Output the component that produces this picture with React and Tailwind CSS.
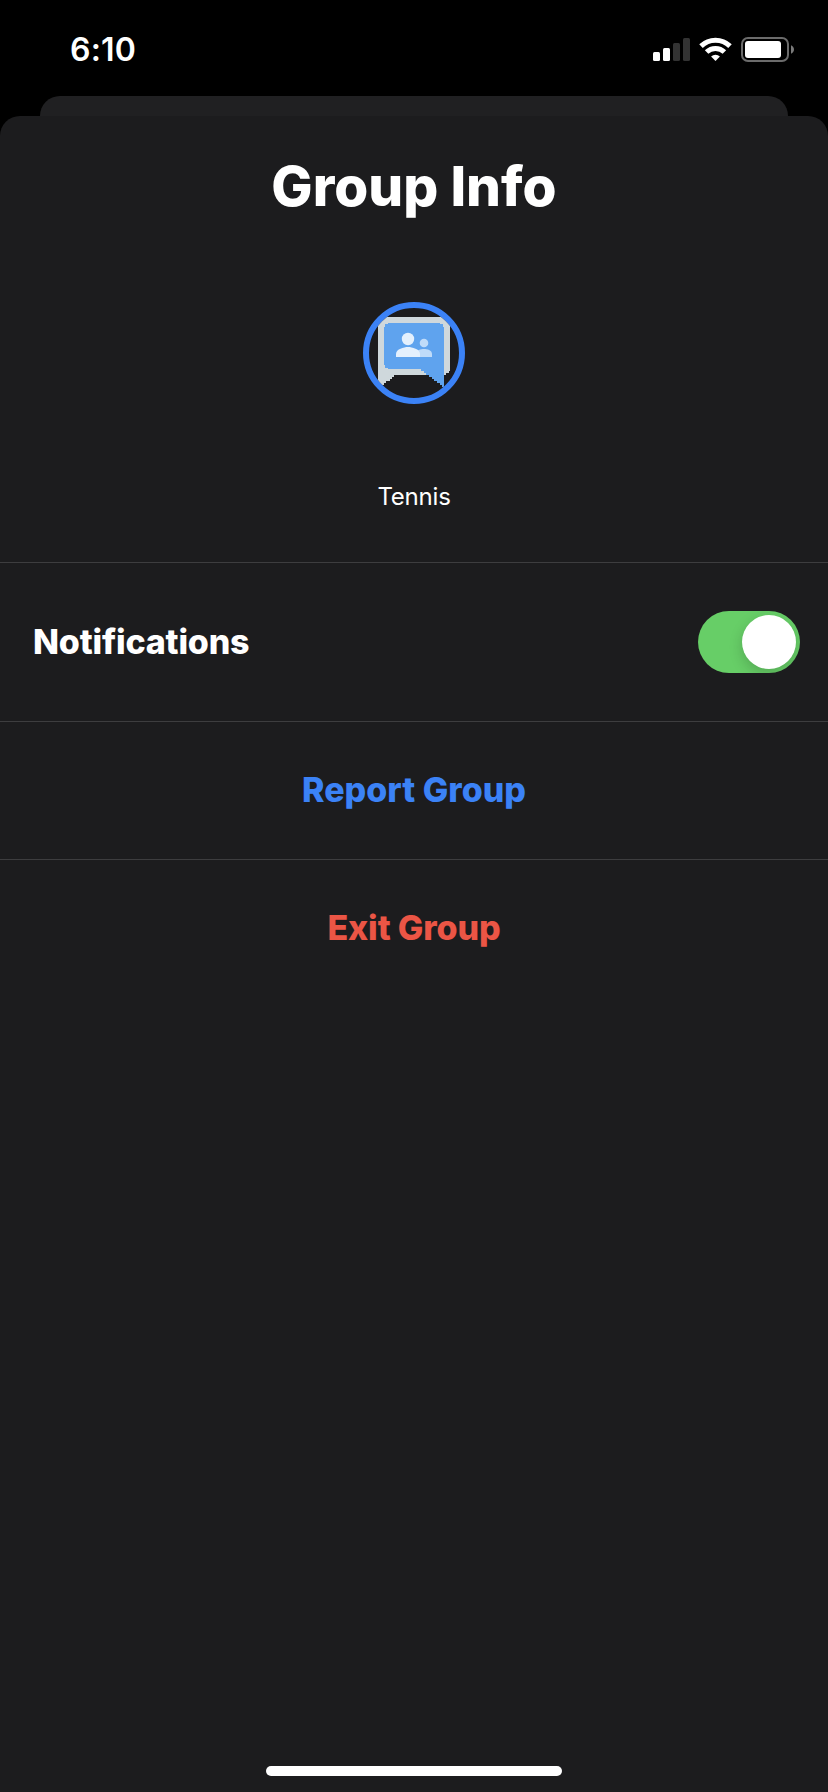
import React, { useState } from 'react';

const StatusBar = () => (
  <div className="flex h-24 items-start justify-between pl-[70px] pr-[34px] pt-[37px]">
    <span className="text-[32px] font-semibold leading-[26px] tracking-[0.2px] text-white">6:10</span>
    <div className="flex items-start">
      <svg width="37" height="25" viewBox="0 0 37 25" className="mr-[9px]">
        <rect x="0" y="15" width="7" height="9" rx="1.5" fill="#fff" />
        <rect x="10" y="11" width="7" height="13" rx="1.5" fill="#fff" />
        <rect x="20" y="6" width="7" height="18" rx="1.5" fill="#333" />
        <rect x="30" y="1" width="7" height="23" rx="1.5" fill="#333" />
      </svg>
      <svg width="33" height="25" viewBox="0 0 33 25" className="mr-[9px]">
        <g fill="none" stroke="#fff" strokeWidth="5">
          <path d="M2 9.1a20.8 20.8 0 0 1 29 0" />
          <path d="M7.6 15a12.8 12.8 0 0 1 17.8 0" />
        </g>
        <path d="M16.5 24l-4.4-4.5a6.4 6.4 0 0 1 8.8 0z" fill="#fff" />
      </svg>
      <svg width="53" height="25" viewBox="0 0 53 25">
        <rect x="1" y="1" width="46" height="23" rx="6" fill="none" stroke="#6b6b6b" strokeWidth="2" />
        <rect x="4" y="4" width="36" height="17" rx="3" fill="#fff" />
        <path d="M50 8.2c1.8.8 3 2.4 3 4.3s-1.2 3.5-3 4.3z" fill="#7a7a7a" />
      </svg>
    </div>
  </div>
);

const GroupAvatar = () => (
  <div className="size-[102px] overflow-hidden rounded-full border-[6px] border-[#3b82f6]">
    <svg width="90" height="90" viewBox="369 308 90 90">
      <path
        d="M378 317H448V319H450V371H449V373H446V375H394V377H392V379H390V381H386V383H384V385H378Z"
        fill="#cfd8dc"
      />
      <path
        d="M388 323H440V324H443V327H444V387H442V385H440V383H437V381H434V379H432V377H429V375H426V373H424V371H421V369H388V368H385V365H384V327H385V324H388Z"
        fill="#5fa3ee"
      />
      <circle cx="424" cy="343" r="4.3" fill="#bfdbf9" />
      <path d="M416 357v-4c0-3 5-4 8-4s8 1 8 5v3z" fill="#bfdbf9" />
      <circle cx="408" cy="339" r="6.2" fill="#e4f0fd" />
      <path d="M396 357v-3c0-5 8-7 12-7s12 2 12 7v3z" fill="#e4f0fd" />
    </svg>
  </div>
);

const Toggle = ({ checked, onChange }) => (
  <button
    type="button"
    role="switch"
    aria-checked={checked}
    aria-label="Notifications"
    onClick={() => onChange(!checked)}
    className={`flex h-[62px] w-[102px] items-center overflow-hidden rounded-full px-1 ${
      checked ? 'justify-end bg-[#67ce67]' : 'justify-start bg-[#39393d]'
    }`}
  >
    <span className="size-[54px] rounded-full bg-white shadow-[0_5px_14px_rgba(0,0,0,0.18)]" />
  </button>
);

const App = () => {
  const [notifications, setNotifications] = useState(true);

  return (
    <div className="flex h-[1792px] w-[828px] flex-col bg-black font-['Inter',sans-serif] whitespace-nowrap">
      <StatusBar />
      <div className="mx-10 h-5 rounded-t-[20px] bg-[#202022]" />

      <div className="flex flex-1 flex-col rounded-t-[20px] bg-[#1c1c1e]">
        <div className="flex h-[446px] flex-col items-center">
          <h1 className="mt-[40px] text-[55px] font-extrabold leading-[60px] text-white">Group Info</h1>
          <div className="mt-[86px]">
            <GroupAvatar />
          </div>
          <p className="mt-[78px] text-[24px] leading-[30px] tracking-[-0.2px] text-white">Tennis</p>
        </div>

        <div className="flex h-[159px] items-center justify-between border-t border-[#3d3d3f] pl-[33px] pr-7">
          <span className="text-[34px] font-extrabold leading-10 tracking-[-0.2px] text-white">Notifications</span>
          <Toggle checked={notifications} onChange={setNotifications} />
        </div>

        <button
          type="button"
          className="h-[138px] border-t border-[#3d3d3f] pb-[2px] text-[34px] font-extrabold leading-10 text-[#3b82f6]"
        >
          Report Group
        </button>
        <button
          type="button"
          className="h-[138px] border-t border-[#3d3d3f] pb-[2px] text-[34px] font-extrabold leading-10 tracking-[-0.1px] text-[#eb5545]"
        >
          Exit Group
        </button>

        <div className="mx-auto mb-4 mt-auto h-[10px] w-[296px] rounded-full bg-white" />
      </div>
    </div>
  );
};

export default App;
